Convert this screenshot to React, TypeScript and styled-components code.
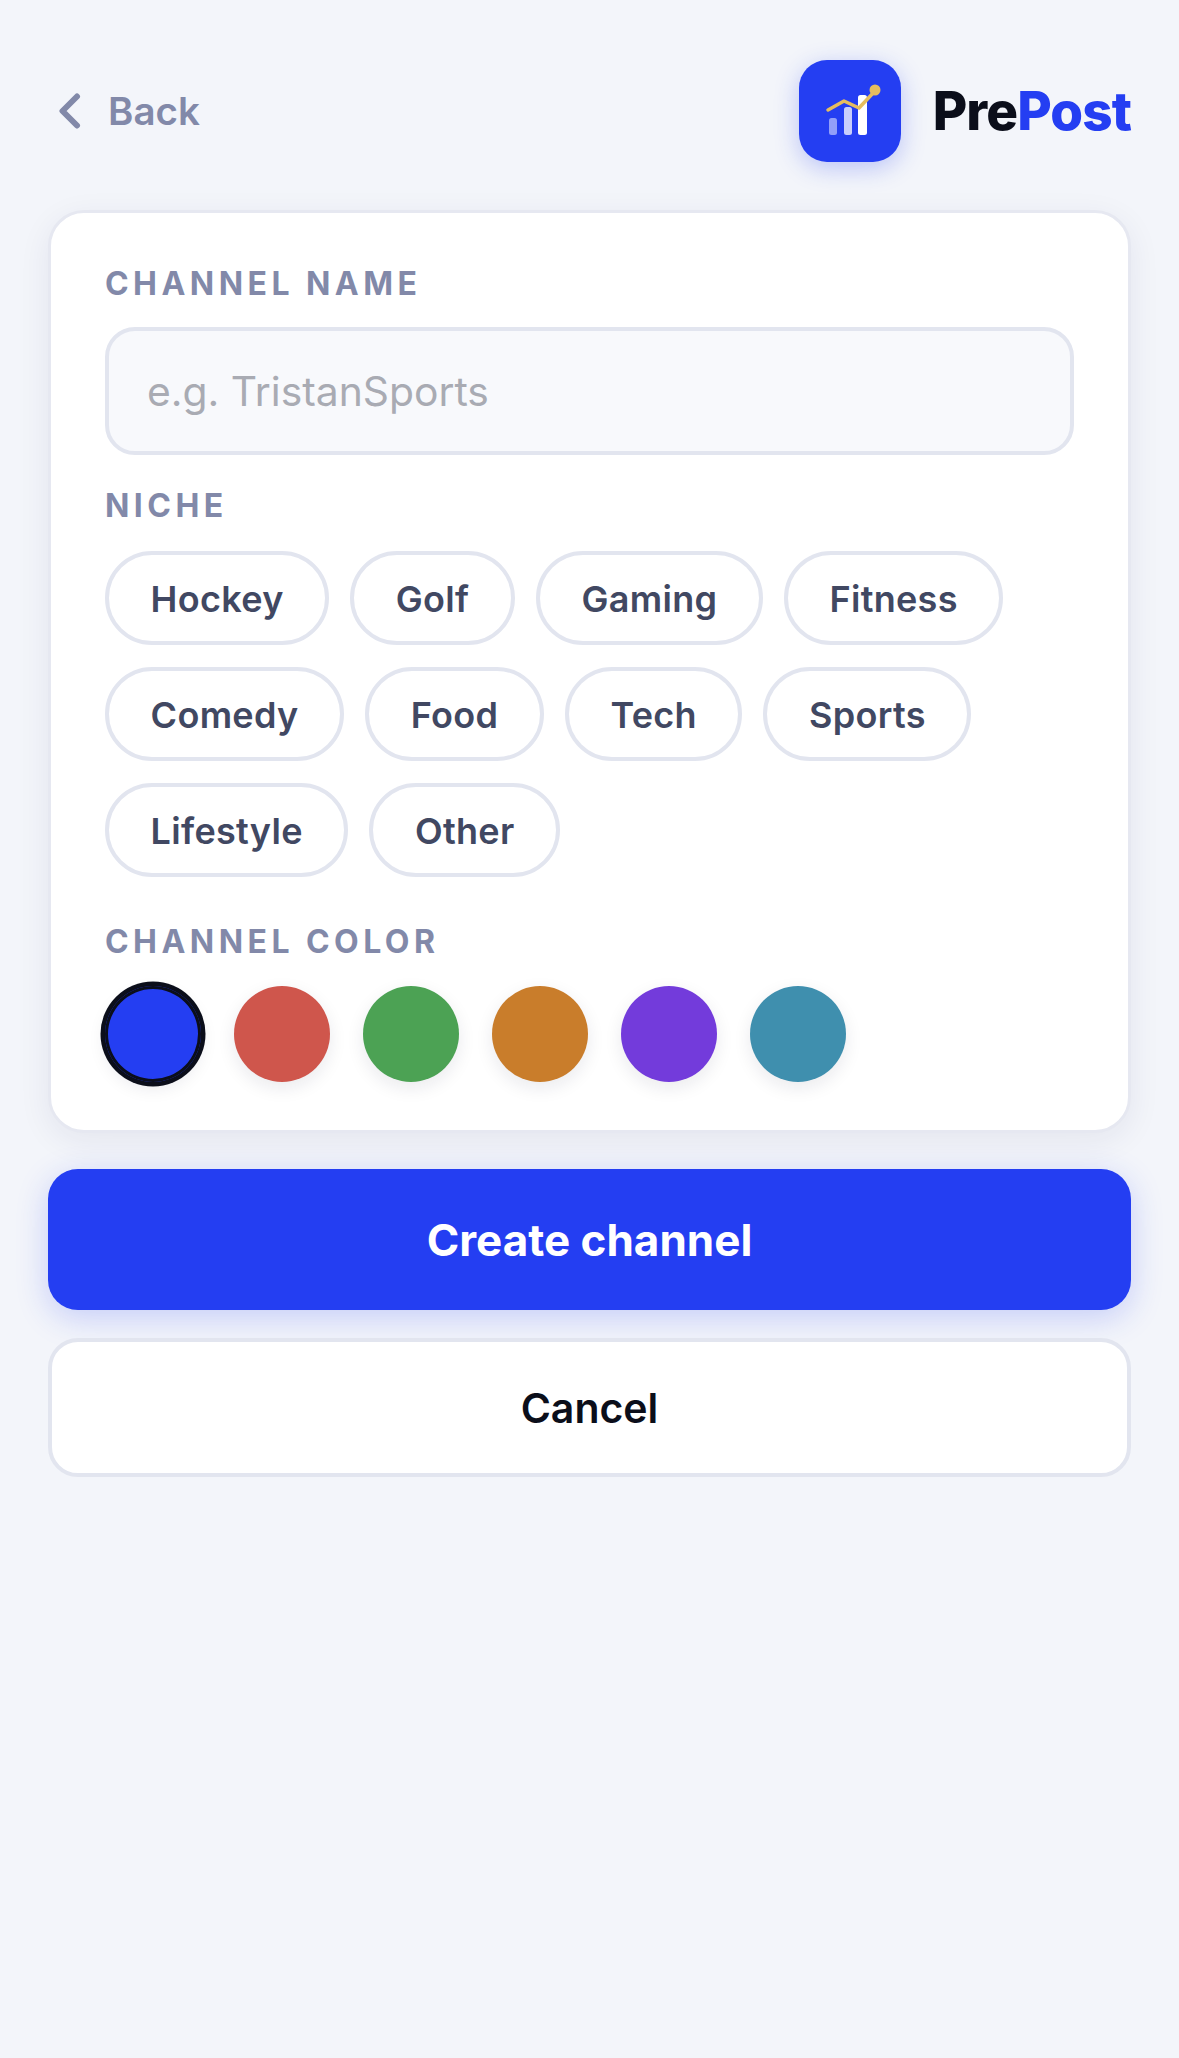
import React, { useState } from 'react';
import styled, { createGlobalStyle } from 'styled-components';

const GlobalStyle = createGlobalStyle`
  * { box-sizing: border-box; }
  html, body { margin: 0; padding: 0; background: #f3f5fa; }
  body { font-family: Inter, "Noto Sans", sans-serif; -webkit-font-smoothing: antialiased; }
`;

const Page = styled.div`
  min-height: 100vh;
  padding: 60px 48px 0;
  display: flex;
  flex-direction: column;
`;

const Header = styled.header`
  display: flex;
  align-items: center;
  justify-content: space-between;
  margin-bottom: 48px;
`;

const BackButton = styled.button`
  display: flex;
  align-items: center;
  gap: 27px;
  margin-left: 10px;
  padding: 0;
  border: 0;
  background: none;
  color: #8289a9;
  font: 600 38.5px Inter, sans-serif;
`;

const Brand = styled.div`
  display: flex;
  align-items: center;
  gap: 32px;
`;

const LogoBox = styled.div`
  width: 102px;
  height: 102px;
  border-radius: 28px;
  background: #243ef2;
  box-shadow: 0 6px 24px rgba(37, 64, 245, 0.28);
`;

const Wordmark = styled.div`
  font-size: 53px;
  font-weight: 800;
  letter-spacing: -0.9px;
  color: #0b0e1a;

  span {
    color: #243ef2;
  }
`;

const Card = styled.section`
  background: #fff;
  border: 3px solid #e6e8f1;
  border-radius: 36px;
  padding: 52px 54px 48px;
  box-shadow: 0 8px 32px rgba(30, 35, 90, 0.07);
`;

const Label = styled.div<{ $mt?: number }>`
  margin-top: ${p => p.$mt ?? 0}px;
  font-size: 32px;
  line-height: 38px;
  font-weight: 700;
  letter-spacing: 4.45px;
  color: #8289a9;
`;

const NameInput = styled.input`
  display: block;
  width: 100%;
  height: 128px;
  margin-top: 24px;
  padding: 0 38px;
  border: 4px solid #e2e5ef;
  border-radius: 30px;
  background: #f8f9fc;
  font: 400 40.8px Inter, sans-serif;
  color: #333;
  outline: none;

  &::placeholder {
    color: #a9abb3;
  }
`;

const ChipGrid = styled.div`
  display: flex;
  flex-wrap: wrap;
  gap: 22px 21px;
  margin-top: 26px;
`;

const Chip = styled.button`
  height: 94px;
  padding: 1px 41.6px 0;
  border: 4px solid #e2e5ef;
  border-radius: 47px;
  background: #fff;
  color: #414862;
  font: 600 36px Inter, sans-serif;
  letter-spacing: 0.3px;
`;

const Swatches = styled.div`
  display: flex;
  gap: 33px;
  margin-top: 25px;
`;

const Swatch = styled.button<{ $color: string; $selected: boolean }>`
  width: 96px;
  height: 96px;
  padding: 0;
  border: 0;
  border-radius: 50%;
  background: ${p => p.$color};
  box-shadow: ${p => (p.$selected ? 'inset 0 0 0 3px #0b0e1a, 0 0 0 4.5px #0b0e1a, ' : '')}0 6px 18px rgba(20, 25, 60, 0.09);
`;

const PrimaryButton = styled.button`
  display: block;
  width: 100%;
  height: 141px;
  margin-top: 36px;
  border: 0;
  border-radius: 30px;
  background: #243ef2;
  color: #fff;
  font: 700 44px Inter, sans-serif;
  box-shadow: 0 8px 32px rgba(37, 64, 245, 0.22);
`;

const SecondaryButton = styled.button`
  display: block;
  width: 100%;
  height: 139px;
  margin-top: 28px;
  border: 4px solid #e2e5ef;
  border-radius: 30px;
  background: #fff;
  color: #0b0e1a;
  font: 600 41px Inter, sans-serif;
`;

const niches = ['Hockey', 'Golf', 'Gaming', 'Fitness', 'Comedy', 'Food', 'Tech', 'Sports', 'Lifestyle', 'Other'];
const colors = ['#243ef2', '#cf564c', '#4ca254', '#c97d2b', '#733bdb', '#3f8fae'];

const Logo = () => (
  <LogoBox>
    <svg width="102" height="102" viewBox="0 0 102 102" fill="none">
      <rect x="30" y="58" width="8" height="17" rx="2.5" fill="#fff" fillOpacity="0.5" />
      <rect x="45" y="47" width="8" height="28" rx="2.5" fill="#fff" fillOpacity="0.75" />
      <rect x="59" y="35" width="9" height="40" rx="2.5" fill="#fff" />
      <path d="M29 50L45 41L60 48L76 31" stroke="#e6bd5f" strokeWidth="3.5" strokeLinecap="round" strokeLinejoin="round" />
      <circle cx="76" cy="30" r="5.5" fill="#e6bd5f" />
    </svg>
  </LogoBox>
);

export default function App() {
  const [color, setColor] = useState(colors[0]);

  return (
    <Page>
      <GlobalStyle />
      <Header>
        <BackButton>
          <svg width="23" height="36" viewBox="0 0 23 36" fill="none">
            <path d="M19 3.5L4.5 18L19 32.5" stroke="#8289a9" strokeWidth="6" strokeLinecap="round" strokeLinejoin="round" />
          </svg>
          Back
        </BackButton>
        <Brand>
          <Logo />
          <Wordmark>
            Pre<span>Post</span>
          </Wordmark>
        </Brand>
      </Header>

      <Card>
        <Label>CHANNEL NAME</Label>
        <NameInput placeholder="e.g. TristanSports" />

        <Label $mt={32}>NICHE</Label>
        <ChipGrid>
          {niches.map(n => (
            <Chip key={n}>{n}</Chip>
          ))}
        </ChipGrid>

        <Label $mt={46}>CHANNEL COLOR</Label>
        <Swatches>
          {colors.map(c => (
            <Swatch key={c} $color={c} $selected={c === color} onClick={() => setColor(c)} />
          ))}
        </Swatches>
      </Card>

      <PrimaryButton>Create channel</PrimaryButton>
      <SecondaryButton>Cancel</SecondaryButton>
    </Page>
  );
}
